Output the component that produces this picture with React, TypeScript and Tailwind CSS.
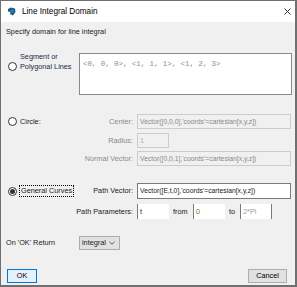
import React from 'react';

const font = { fontFamily: '"Liberation Sans", Arial, sans-serif' };

const Radio = ({ checked = false }: { checked?: boolean }) => (
  <span className="w-[9px] h-[9px] rounded-full border border-[#333333] bg-white flex items-center justify-center shrink-0">
    {checked && <span className="w-[5px] h-[5px] rounded-full bg-[#333333]" />}
  </span>
);

const FieldLabel = ({ children, disabled = false }: { children: React.ReactNode; disabled?: boolean }) => (
  <span className={`w-[60px] flex justify-end whitespace-nowrap pr-[4px] shrink-0 ${disabled ? 'text-[#8a8a8a]' : 'text-[#1a1a1a]'}`}>
    {children}
  </span>
);

export default function App() {
  return (
    <div
      className="w-[297px] h-[287px] border border-[#707070] border-r-2 border-b-2 flex flex-col text-[7.3px] leading-[10px] text-[#1a1a1a] overflow-hidden"
      style={font}
    >
      {/* title bar */}
      <div className="h-[21px] bg-white flex items-center shrink-0">
        <svg width="9" height="9" viewBox="0 0 9 9" className="ml-[6px] mr-[6px]">
          <path d="M1 2 L4 0.5 L8 1.5 L8.5 5 L6 8.5 L3 7 L3.5 5 L1 4.5 Z" fill="#1c5a86" />
          <path d="M4 2.5 L6.5 3 L6 6 L4.5 5 Z" fill="#3b8cc2" />
        </svg>
        <span className="text-[8.2px] text-black">Line Integral Domain</span>
        <svg width="7" height="7" viewBox="0 0 7 7" className="ml-auto mr-[4px]">
          <path d="M0.5 0.5 L6.5 6.5 M6.5 0.5 L0.5 6.5" stroke="#222" strokeWidth="0.9" />
        </svg>
      </div>

      {/* body */}
      <div className="flex-1 bg-[#f0f0f0] flex flex-col">
        <div className="h-[20px] flex items-center pl-[5px]">Specify domain for line integral</div>

        {/* segment */}
        <div className="mt-[11px] flex h-[42px]">
          <div className="w-[78px] shrink-0 flex items-start pl-[7px] pt-[9px] gap-[3px]">
            <Radio />
            <div className="-mt-[10px] text-[#1a2a4a]">
              <div>Segment or</div>
              <div>Polygonal Lines</div>
            </div>
          </div>
          <div className="flex-1 mr-[3px] bg-white border border-[#8a8a8a] px-[3px] pt-[5px]">
            <span className="text-[#8c8c8c] text-[7.4px]" style={{ fontFamily: '"Liberation Mono", "Courier New", monospace' }}>
              {'<0, 0, 0>, <1, 1, 1>, <1, 2, 3>'}
            </span>
          </div>
        </div>

        {/* circle */}
        <div className="mt-[19px] flex">
          <div className="w-[78px] shrink-0 flex items-center pl-[7px] gap-[3px] h-[15px]">
            <Radio />
            <span>Circle:</span>
          </div>
          <div className="flex flex-col gap-[4px] -ml-[2px]">
            <div className="flex items-center h-[15px]">
              <FieldLabel disabled>Center:</FieldLabel>
              <div className="w-[154px] h-[15px] border border-[#cccccc] flex items-center px-[2px] text-[#8a8a8a] text-[6.8px]">
                Vector([0,0,0],'coords'=cartesian[x,y,z])
              </div>
            </div>
            <div className="flex items-center h-[15px]">
              <FieldLabel disabled>Radius:</FieldLabel>
              <div className="w-[32px] h-[15px] border border-[#cccccc] flex items-center px-[2px] text-[#b0b0b0]">1</div>
            </div>
            <div className="flex items-center h-[15px] -mt-[1px]">
              <FieldLabel disabled>Normal Vector:</FieldLabel>
              <div className="w-[154px] h-[15px] border border-[#cccccc] flex items-center px-[2px] text-[#8a8a8a] text-[6.8px]">
                Vector([0,0,1],'coords'=cartesian[x,y,z])
              </div>
            </div>
          </div>
        </div>

        {/* general curves */}
        <div className="mt-[17px] flex">
          <div className="w-[78px] shrink-0 flex items-center pl-[7px] gap-[2px] h-[16px]">
            <Radio checked />
            <span className="border border-dotted border-black px-[1px] leading-[10px] whitespace-nowrap">General Curves</span>
          </div>
          <div className="flex flex-col gap-[5px] -ml-[2px]">
            <div className="flex items-center h-[16px]">
              <FieldLabel>Path Vector:</FieldLabel>
              <div className="w-[154px] h-[16px] bg-white border border-[#7a7a7a] flex items-center px-[2px] text-[6.8px] text-[#1a1a1a]">
                Vector([E,t,0],'coords'=cartesian[x,y,z])
              </div>
            </div>
            <div className="flex items-center h-[15px]">
              <FieldLabel>Path Parameters:</FieldLabel>
              <div className="w-[32px] h-[15px] bg-white border-l border-[#7a7a7a] flex items-center px-[2px]">t</div>
              <span className="ml-[4px] w-[20px]">from</span>
              <div className="w-[32px] h-[15px] bg-white border-l border-[#7a7a7a] flex items-center px-[2px] text-[#8a6a2a]">0</div>
              <span className="ml-[4px] w-[11px]">to</span>
              <div className="w-[32px] h-[15px] bg-white border-l border-r border-[#7a7a7a] flex items-center px-[2px] text-[#9a9a9a]">2*Pi</div>
            </div>
          </div>
        </div>

        {/* on ok return */}
        <div className="mt-[17px] flex items-center h-[14px]">
          <span className="w-[78px] pl-[5px] shrink-0">On 'OK' Return</span>
          <div className="w-[41px] h-[14px] bg-[#e1e1e1] border border-[#adadad] flex items-center pl-[2px] gap-[3px]">
            <span>integral</span>
            <svg width="6" height="4" viewBox="0 0 6 4">
              <path d="M0.5 0.8 L3 3.2 L5.5 0.8" stroke="#333" strokeWidth="0.8" fill="none" />
            </svg>
          </div>
        </div>

        {/* buttons */}
        <div className="mt-[19px] flex items-center px-[6px] pr-[8px]">
          <button className="w-[30px] h-[14px] bg-[#e5f1fb] border border-[#0078d7] text-black flex items-center justify-center">
            OK
          </button>
          <button className="ml-auto w-[39px] h-[14px] bg-[#e1e1e1] border border-[#adadad] text-black flex items-center justify-center">
            Cancel
          </button>
        </div>
      </div>
    </div>
  );
}
